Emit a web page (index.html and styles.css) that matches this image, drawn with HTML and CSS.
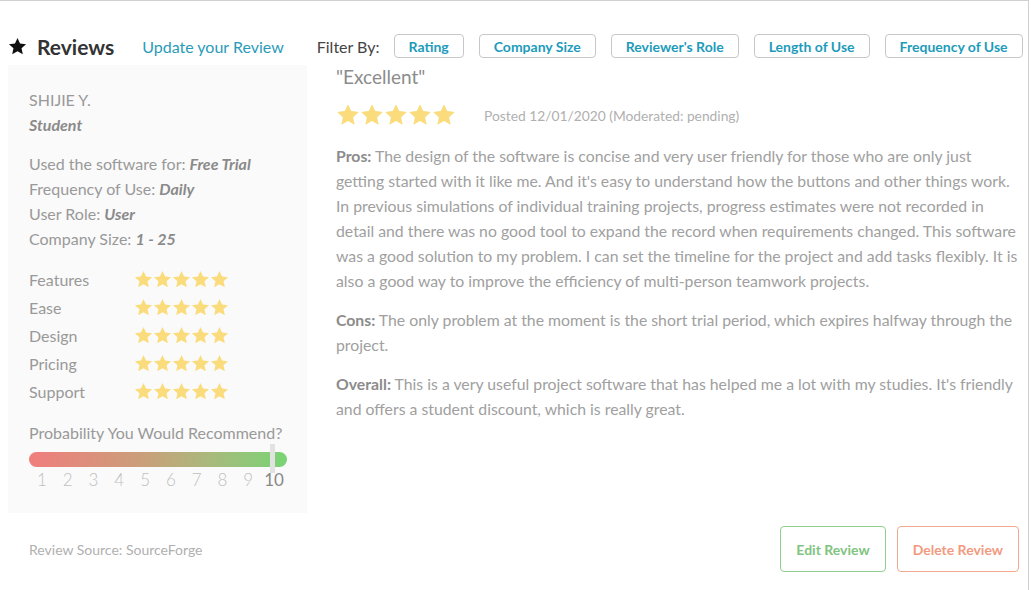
FILE: index.html
```html
<!DOCTYPE html>
<html>
<head>
<meta charset="utf-8">
<link rel="stylesheet" href="styles.css">
</head>
<body>
<div class="page">
  <div class="header">
    <svg class="head-star" viewBox="0 0 24 24"><polygon points="12,1.2 15.2,8.1 22.8,9 17.1,14.2 18.7,21.8 12,18 5.3,21.8 6.9,14.2 1.2,9 8.8,8.1"/></svg>
    <h1 class="title">Reviews</h1>
    <a class="update-link">Update your Review</a>
    <span class="filter-label">Filter By:</span>
    <div class="filters">
      <button class="filter-btn">Rating</button>
      <button class="filter-btn">Company Size</button>
      <button class="filter-btn">Reviewer's Role</button>
      <button class="filter-btn">Length of Use</button>
      <button class="filter-btn">Frequency of Use</button>
    </div>
  </div>

  <div class="review">
    <aside class="sidebar">
      <div class="block">
        <div class="line">SHIJIE Y.</div>
        <div class="line val">Student</div>
      </div>
      <div class="block">
        <div class="line">Used the software for: <span class="val">Free Trial</span></div>
        <div class="line">Frequency of Use: <span class="val">Daily</span></div>
        <div class="line">User Role: <span class="val">User</span></div>
        <div class="line">Company Size: <span class="val">1 - 25</span></div>
      </div>
      <div class="ratings">
        <div class="rating-row"><span class="rating-name">Features</span><span class="stars small"></span></div>
        <div class="rating-row"><span class="rating-name">Ease</span><span class="stars small"></span></div>
        <div class="rating-row"><span class="rating-name">Design</span><span class="stars small"></span></div>
        <div class="rating-row"><span class="rating-name">Pricing</span><span class="stars small"></span></div>
        <div class="rating-row"><span class="rating-name">Support</span><span class="stars small"></span></div>
      </div>
      <div class="recommend">
        <div class="line">Probability You Would Recommend?</div>
        <div class="scale">
          <div class="bar"></div>
          <div class="marker"></div>
          <div class="nums">
            <span>1</span><span>2</span><span>3</span><span>4</span><span>5</span><span>6</span><span>7</span><span>8</span><span>9</span><span class="sel">10</span>
          </div>
        </div>
      </div>
    </aside>

    <main class="content">
      <h2 class="review-title">"Excellent"</h2>
      <div class="meta">
        <span class="stars big"></span>
        <span class="posted">Posted 12/01/2020 (Moderated: pending)</span>
      </div>
      <p class="para"><b>Pros:</b> The design of the software is concise and very user friendly for those who are only just getting started with it like me. And it's easy to understand how the buttons and other things work. In previous simulations of individual training projects, progress estimates were not recorded in detail and there was no good tool to expand the record when requirements changed. This software was a good solution to my problem. I can set the timeline for the project and add tasks flexibly. It is also a good way to improve the efficiency of multi-person teamwork projects.</p>
      <p class="para"><b>Cons:</b> The only problem at the moment is the short trial period, which expires halfway through the project.</p>
      <p class="para"><b>Overall:</b> This is a very useful project software that has helped me a lot with my studies. It's friendly and offers a student discount, which is really great.</p>
    </main>
  </div>

  <div class="footer">
    <span class="source">Review Source: SourceForge</span>
    <div class="actions">
      <button class="act edit">Edit Review</button>
      <button class="act delete">Delete Review</button>
    </div>
  </div>
</div>
<script>
  var star = '<svg viewBox="0 0 24 24"><polygon points="12,1.2 15.2,8.1 22.8,9 17.1,14.2 18.7,21.8 12,18 5.3,21.8 6.9,14.2 1.2,9 8.8,8.1"/></svg>';
  document.querySelectorAll('.stars').forEach(function (el) {
    el.innerHTML = star + star + star + star + star;
  });
</script>
</body>
</html>
```

FILE: styles.css
```css
* { box-sizing: border-box; }
html, body { margin: 0; padding: 0; background: #fff; }
body { font-family: Lato, "Open Sans", sans-serif; color: #999; }

.page {
  width: 1029px;
  height: 590px;
  border-top: 1px solid #d0d0d0;
  border-right: 1px solid #d0d0d0;
}

.header {
  display: flex;
  align-items: center;
  height: 26px;
  margin-top: 32px;
  padding-left: 8px;
}
.head-star { width: 19px; height: 19px; fill: #111; }
.title {
  margin: 0 0 0 10px;
  font-size: 21px;
  font-weight: 700;
  color: #333;
}
.update-link {
  margin-left: 28px;
  font-size: 16px;
  color: #2a9bb8;
}
.filter-label {
  margin-left: 33px;
  font-size: 16px;
  color: #444;
}
.filters { display: flex; gap: 15px; margin-left: 14px; }
.filter-btn {
  height: 24px;
  padding: 0 14px;
  border: 1px solid #c8c8c8;
  border-radius: 4px;
  background: #fff;
  font-family: Lato, sans-serif;
  font-size: 14px;
  font-weight: 700;
  color: #1d9bbb;
}

.review { display: flex; margin-top: 6px; }

.sidebar {
  width: 299px;
  margin-left: 8px;
  background: #fafafa;
  padding: 22px 21px 20px 21px;
  font-size: 16px;
  line-height: 25px;
}
.block { margin-bottom: 14px; }
.val { font-style: italic; font-weight: 700; color: #8a8a8a; }

.ratings { margin-top: 12px; }
.rating-row { display: flex; align-items: center; height: 28px; }
.rating-name { width: 105px; }
.stars { display: flex; }
.stars svg { fill: #fbdc7c; }
.stars.small svg { width: 19px; height: 19px; }
.stars.big svg { width: 24px; height: 24px; }

.recommend { margin-top: 15px; }
.scale { position: relative; width: 258px; margin-top: 7px; }
.bar {
  height: 15px;
  border-radius: 8px;
  background: linear-gradient(to right, #f07d7d 0%, #c9a07a 45%, #a9b97c 70%, #78d474 100%);
}
.marker {
  position: absolute;
  left: 241px;
  top: -8px;
  width: 5px;
  height: 29px;
  background: #e2e2e2;
}
.nums {
  display: grid;
  grid-template-columns: repeat(10, 1fr);
  text-align: center;
  font-size: 17px;
  line-height: 26px;
  color: #c0c0c0;
  font-weight: 300;
}
.nums .sel { color: #888; font-weight: 400; }

.content { width: 684px; margin-left: 29px; }
.review-title {
  margin: 0;
  font-size: 19px;
  line-height: 24px;
  font-weight: 400;
  color: #8c8c8c;
}
.meta { display: flex; align-items: center; margin-top: 14px; }
.posted { margin-left: 28px; font-size: 13.8px; color: #b0b0b0; }
.para {
  margin: 16px 0 0 0;
  font-size: 15.8px;
  line-height: 25px;
  color: #a0a0a0;
}
.para + .para { margin-top: 14px; }
.para b { color: #8c8c8c; }

.footer {
  display: flex;
  align-items: center;
  justify-content: space-between;
  margin-top: 13px;
  padding-left: 29px;
  padding-right: 9px;
}
.source { font-size: 14px; color: #b0b0b0; }
.actions { display: flex; gap: 11px; }
.act {
  height: 46px;
  padding: 0 15px;
  border-radius: 4px;
  background: #fff;
  font-family: Lato, sans-serif;
  font-size: 14px;
  font-weight: 700;
}
.edit { border: 1px solid #8fcf8f; color: #7fc47f; }
.delete { border: 1px solid #f2a88f; color: #f29a80; }
```
